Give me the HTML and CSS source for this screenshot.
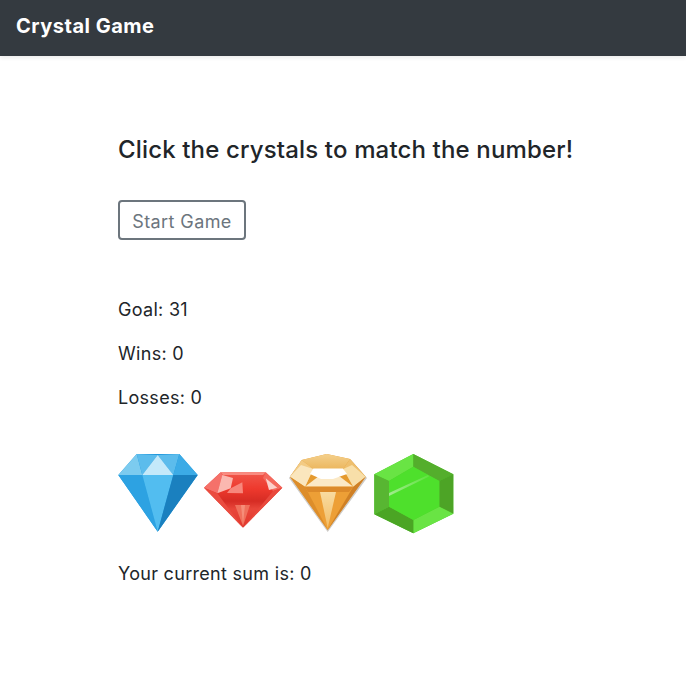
FILE: index.html
```html
<!DOCTYPE html>
<html lang="en">
<head>
<meta charset="utf-8">
<title>Crystal Game</title>
<link rel="stylesheet" href="styles.css">
</head>
<body>
<nav class="navbar"><span class="brand">Crystal Game</span></nav>
<main class="content">
  <h2 class="heading">Click the crystals to match the number!</h2>
  <button class="start" type="button">Start Game</button>
  <section class="stats">
    <p class="line">Goal: 31</p>
    <p class="line">Wins: 0</p>
    <p class="line">Losses: 0</p>
  </section>
  <div class="crystals">
    <svg class="gem" viewBox="0 0 80 80" aria-label="Blue crystal">
      <polygon points="18.7,0 61.3,0 79.7,21 39.7,77.7 0.3,21" fill="#1f97dc"/>
      <polygon points="18.7,0 24.3,21 0.3,21" fill="#7ccbef"/>
      <polygon points="18.7,0 39.7,1 24.3,21" fill="#5cbcec"/>
      <polygon points="61.3,0 39.7,1 55.3,21" fill="#5cbcec"/>
      <polygon points="61.3,0 79.7,21 55.3,21" fill="#3cabe6"/>
      <polygon points="39.7,1 55.3,21 24.3,21" fill="#c4e9fa"/>
      <polygon points="0.3,21 24.3,21 39.7,77.7" fill="#2da2e2"/>
      <polygon points="24.3,21 55.3,21 39.7,77.7" fill="#52bdf0"/>
      <polygon points="55.3,21 79.7,21 39.7,77.7" fill="#1a80bf"/>
    </svg>
    <svg class="gem" viewBox="0 0 80 80" aria-label="Red crystal">
      <defs>
        <linearGradient id="ruby" gradientUnits="userSpaceOnUse" x1="0" y1="18" x2="0" y2="74">
          <stop offset="0" stop-color="#f0584c"/>
          <stop offset="0.3" stop-color="#ee392d"/>
          <stop offset="0.52" stop-color="#d62c24"/>
          <stop offset="0.66" stop-color="#e8463a"/>
          <stop offset="1" stop-color="#e0372c"/>
        </linearGradient>
      </defs>
      <polygon points="17.7,18.3 62.7,18.3 79.3,33.7 40,73.7 1,33.7" fill="url(#ruby)"/>
      <polygon points="17.7,18.3 62.7,18.3 60,21 20,21" fill="#f98b80"/>
      <polygon points="17.7,18.3 1,33.7 14.3,39.3 19.3,21" fill="#f5716a"/>
      <polygon points="19.3,21 30,24 27.7,34.3 14.3,39.3" fill="#fbb8b0"/>
      <polygon points="27.7,34.3 39.3,28.3 40,39.3 24,39" fill="#f7877c"/>
      <polygon points="62.7,18.3 79.3,33.7 70,37 60,24" fill="#f4695d"/>
      <polygon points="62.7,24.3 74.3,33.7 66,36" fill="#fcd0ca"/>
      <polygon points="1,33.7 14.3,39.3 40,73.7" fill="#ea4c40"/>
      <polygon points="79.3,33.7 70,37 40,73.7" fill="#e9493d"/>
      <polygon points="32,51 47,51 40,72" fill="#f0705c"/>
      <polygon points="38,51 42,51 40,70" fill="#f68e7a"/>
    </svg>
    <svg class="gem" viewBox="0 0 80 80" aria-label="Gold crystal">
      <defs>
        <linearGradient id="goldTop" x1="0" y1="0" x2="0" y2="1">
          <stop offset="0" stop-color="#f4d08c"/>
          <stop offset="1" stop-color="#ecb75f"/>
        </linearGradient>
        <linearGradient id="goldRay" x1="0" y1="0" x2="0" y2="1">
          <stop offset="0" stop-color="#f9dba0"/>
          <stop offset="1" stop-color="#f2bd66"/>
        </linearGradient>
      </defs>
      <polygon points="0,24 12,7 37.7,1 62,6 78,24 38.7,78" fill="#6f675d" opacity="0.35"/>
      <polygon points="12.7,6 37.7,0 61,5 76.7,22.7 38.7,76 1,22.7" fill="#e59a2e"/>
      <polygon points="12.7,6 37.7,0 61,5 54.3,15 24.3,15" fill="url(#goldTop)"/>
      <polygon points="1,22.7 12.7,6 24.3,15 16,32.7" fill="#f3cb84"/>
      <polygon points="1,22.7 12,11 24.3,15 16,32.7" fill="#fae6bd"/>
      <polygon points="76.7,22.7 61,5 54.3,15 64.3,32.7" fill="#eebf6e"/>
      <polygon points="76.7,22.7 63,11 54.3,15 64.3,32.7" fill="#f8dfa9"/>
      <polygon points="16,32.7 29,22.7 51,22.7 64.3,32.7" fill="#fbe9c6"/>
      <polygon points="24.3,14.5 54,14.5 58,20 44,25 32,25 21,20" fill="#fff"/>
      <polygon points="16,32.7 64.3,32.7 38.7,76" fill="#ed9f36"/>
      <polygon points="1,22.7 16,32.7 38.7,76" fill="#dd8d2a"/>
      <polygon points="76.7,22.7 64.3,32.7 38.7,76" fill="#cf8026"/>
      <polygon points="16,32.7 64.3,32.7 60,38 19,38" fill="#dc8a2a"/>
      <polygon points="31,38 47,38 38.7,74" fill="url(#goldRay)"/>
    </svg>
    <svg class="gem" viewBox="0 0 80 80" aria-label="Green crystal">
      <defs>
        <linearGradient id="glint" x1="0" y1="0" x2="1" y2="0">
          <stop offset="0" stop-color="#a2eb8e"/>
          <stop offset="1" stop-color="#5fe33f"/>
        </linearGradient>
      </defs>
      <polygon points="39.3,0 79.3,20.3 79.3,59.7 39.3,79.3 0.3,60.3 0.3,20.3" fill="#4ecf2c"/>
      <polygon points="39.3,0 0.3,20.3 15,27 39.3,12.7" fill="#69e444"/>
      <polygon points="39.3,0 79.3,20.3 65.3,27 39.3,12.7" fill="#54ae2c"/>
      <polygon points="79.3,20.3 79.3,59.7 65.3,52.7 65.3,27" fill="#4da426"/>
      <polygon points="79.3,59.7 39.3,79.3 39.3,66 65.3,52.7" fill="#69e444"/>
      <polygon points="39.3,79.3 0.3,60.3 15,52.7 39.3,66" fill="#4ba524"/>
      <polygon points="0.3,60.3 0.3,20.3 15,27 15,52.7" fill="#58b632"/>
      <polygon points="15,27 39.3,12.7 65.3,27 65.3,52.7 39.3,66 15,52.7" fill="#4ee02c"/>
      <polygon points="15,39 54,21 55,22.5 15,42" fill="url(#glint)"/>
    </svg>
  </div>
  <p class="line sum">Your current sum is: 0</p>
</main>
</body>
</html>
```
FILE: styles.css
```css
* { box-sizing: border-box; }
html, body { margin: 0; padding: 0; }
body {
  background: #fff;
  color: #212529;
  font-family: Inter, "Liberation Sans", sans-serif;
  font-size: 18px;
  letter-spacing: 0.3px;
  line-height: 24px;
}
.navbar {
  display: flex;
  align-items: center;
  height: 56px;
  padding: 0 16px 4px;
  background: #343a40;
  box-shadow: 0 2px 4px rgba(0, 0, 0, 0.08);
}
.brand {
  color: #fff;
  font-size: 20px;
  font-weight: 700;
  letter-spacing: 0.5px;
  line-height: 24px;
}
.content {
  padding: 79px 0 0 118px;
}
.heading {
  margin: 0 0 35px;
  font-size: 24px;
  font-weight: 500;
  letter-spacing: 0.15px;
  line-height: 30px;
}
.start {
  display: block;
  width: 128px;
  height: 40px;
  padding: 3px 0 0;
  margin: 0 0 58px;
  background: transparent;
  border: 2px solid #6c757d;
  border-radius: 4px;
  color: #6c757d;
  font: inherit;
  font-size: 18px;
  letter-spacing: 0.4px;
}
.line {
  margin: 0 0 20px;
}
.stats {
  margin-bottom: 44px;
}
.crystals {
  display: flex;
  gap: 5.33px;
  margin-bottom: 28px;
}
.gem {
  display: block;
  width: 80px;
  height: 80px;
  flex: none;
  filter: blur(0.3px);
}
.sum {
  margin: 0;
}
```
